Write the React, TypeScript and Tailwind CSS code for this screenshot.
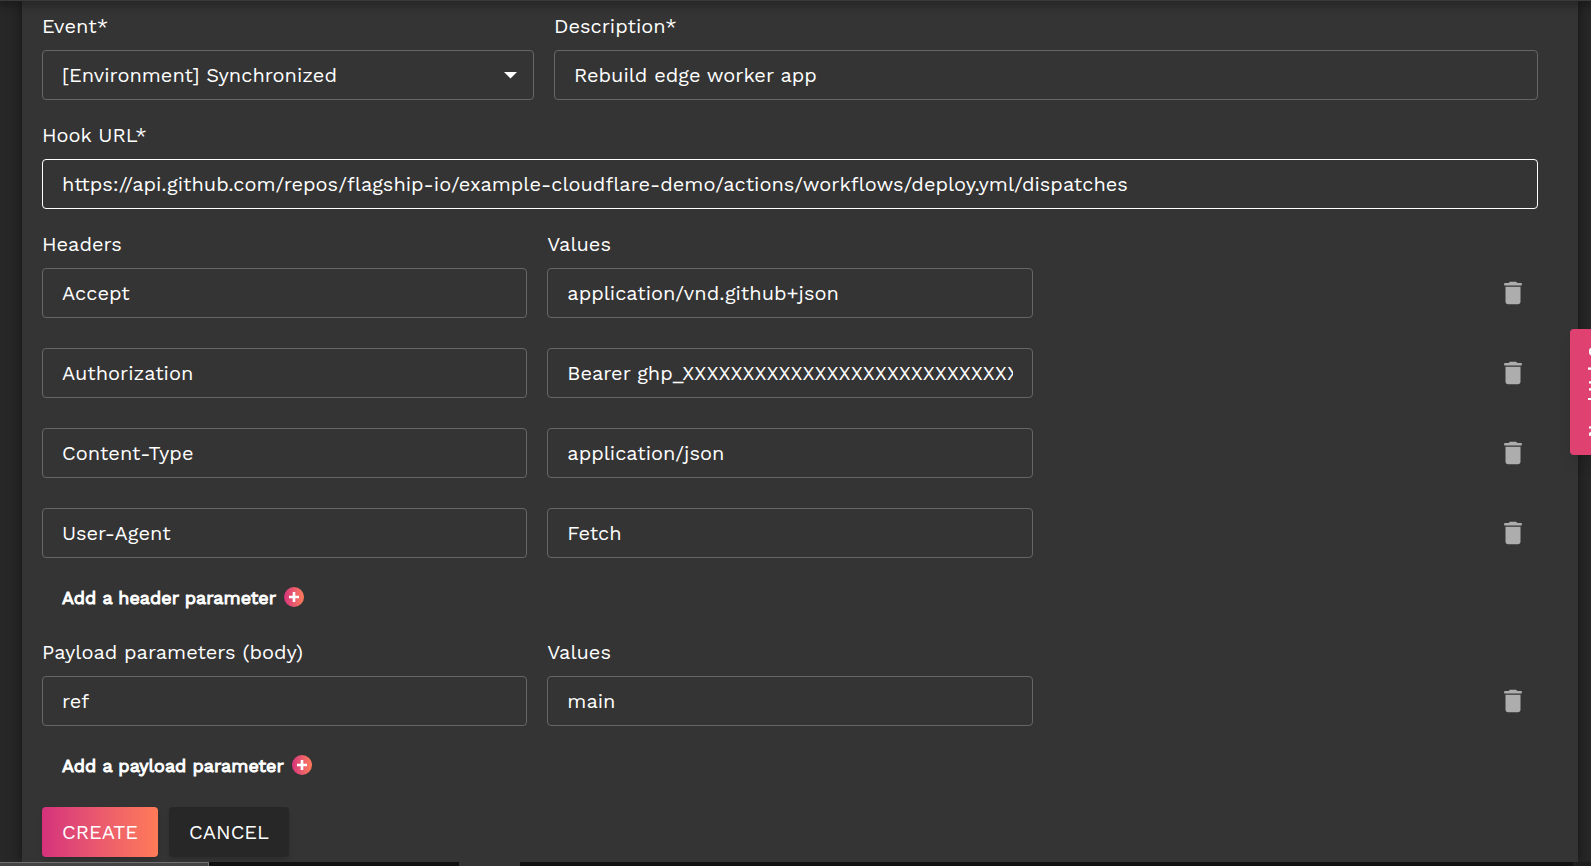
import React, { InputHTMLAttributes, useId, useState } from 'react';
import clsx from 'clsx';

interface Param {
  id: number;
  name: string;
  value: string;
}

interface ParamListProps {
  title: string;
  addLabel: string;
  initialParams: Param[];
}

const events = ['[Environment] Synchronized', '[Environment] Created', '[Environment] Deleted'];

const defaultHeaders: Param[] = [
  { id: 1, name: 'Accept', value: 'application/vnd.github+json' },
  { id: 2, name: 'Authorization', value: 'Bearer ghp_XXXXXXXXXXXXXXXXXXXXXXXXXXXXXXXXXXXX' },
  { id: 3, name: 'Content-Type', value: 'application/json' },
  { id: 4, name: 'User-Agent', value: 'Fetch' },
];

const defaultPayload: Param[] = [{ id: 1, name: 'ref', value: 'main' }];

const fieldClass =
  'block w-full h-[50px] px-[19px] rounded border bg-transparent text-[20px] text-white outline-none focus:border-white';

const TrashIcon = () => (
  <svg width="30" height="30" viewBox="0 0 24 24" fill="currentColor" aria-hidden="true">
    <path d="M6 19c0 1.1.9 2 2 2h8c1.1 0 2-.9 2-2V7H6v12zM19 4h-3.5l-1-1h-5l-1 1H5v2h14V4z" />
  </svg>
);

const PlusIcon = () => (
  <span className="flex size-5 items-center justify-center rounded-full bg-linear-to-r from-[#d5317b] to-[#ff7b57]">
    <svg width="10" height="10" viewBox="0 0 10 10" aria-hidden="true">
      <path d="M5 0v10M0 5h10" stroke="white" strokeWidth="2.6" />
    </svg>
  </span>
);

const Field: React.FC<InputHTMLAttributes<HTMLInputElement> & { label: string }> = ({ label, className, ...rest }) => {
  const id = useId();

  return (
    <div className="flex flex-col gap-3">
      <label htmlFor={id} className="leading-6">{label}</label>
      <input id={id} className={clsx(fieldClass, className)} {...rest} />
    </div>
  );
};

const ParamList: React.FC<ParamListProps> = ({ title, addLabel, initialParams }) => {
  const [params, setParams] = useState(initialParams);

  const updateParam = (id: number, patch: Partial<Param>) => {
    setParams(params.map((param) => (param.id === id ? { ...param, ...patch } : param)));
  };

  return (
    <section className="flex flex-col">
      <div className="mb-3 grid grid-cols-3 gap-5 leading-6">
        <span>{title}</span>
        <span>Values</span>
      </div>
      <div className="flex flex-col gap-[30px]">
        {params.map((param) => (
          <div key={param.id} className="grid grid-cols-3 gap-5">
            <input
              aria-label={title}
              className={clsx(fieldClass, 'border-[#666]')}
              value={param.name}
              onChange={(e) => updateParam(param.id, { name: e.target.value })}
            />
            <input
              aria-label="Value"
              className={clsx(fieldClass, 'border-[#666]')}
              value={param.value}
              onChange={(e) => updateParam(param.id, { value: e.target.value })}
            />
            <button
              type="button"
              aria-label="Delete"
              className="flex size-[50px] items-center justify-center justify-self-end text-[#adadad] hover:text-white"
              onClick={() => setParams(params.filter((p) => p.id !== param.id))}
            >
              <TrashIcon />
            </button>
          </div>
        ))}
      </div>
      <button
        type="button"
        className="mt-[14px] flex h-[50px] items-center gap-2 self-start px-5 text-[18px] [-webkit-text-stroke:1px]"
        onClick={() => setParams([...params, { id: Date.now(), name: '', value: '' }])}
      >
        {addLabel}
        <PlusIcon />
      </button>
    </section>
  );
};

export default function App() {
  const [event, setEvent] = useState(events[0]);
  const [description, setDescription] = useState('Rebuild edge worker app');
  const [hookUrl, setHookUrl] = useState(
    'https://api.github.com/repos/flagship-io/example-cloudflare-demo/actions/workflows/deploy.yml/dispatches'
  );

  return (
    <div className="flex min-h-screen flex-col bg-[#272727] font-['Work_Sans',Inter,sans-serif] text-[20px] text-white">
      <header className="relative z-10 h-px bg-[#3a3a3a] shadow-[0_1px_8px_2px_rgba(0,0,0,0.5)]" />

      <main className="flex flex-1 overflow-hidden pl-[22px] pr-[13px]">
        <form
          className="flex flex-1 flex-col bg-[#343434] pt-[13px] pr-10 pb-[5px] pl-5 shadow-[0_0_12px_rgba(0,0,0,0.5)]"
          onSubmit={(e) => e.preventDefault()}
        >
          <div className="mb-[23px] grid grid-cols-[1fr_2fr] gap-5">
            <div className="flex flex-col gap-3">
              <label htmlFor="event" className="leading-6">Event*</label>
              <div className="relative">
                <select
                  id="event"
                  className={clsx(fieldClass, 'appearance-none border-[#666]')}
                  value={event}
                  onChange={(e) => setEvent(e.target.value)}
                >
                  {events.map((name) => (
                    <option key={name} className="bg-[#343434]">{name}</option>
                  ))}
                </select>
                <svg
                  className="pointer-events-none absolute top-[22px] right-[17px]"
                  width="13"
                  height="7"
                  viewBox="0 0 13 7"
                  fill="white"
                  aria-hidden="true"
                >
                  <path d="M0 0h13L6.500 6.500z" />
                </svg>
              </div>
            </div>
            <Field
              label="Description*"
              className="border-[#666]"
              value={description}
              onChange={(e) => setDescription(e.target.value)}
            />
          </div>

          <div className="mb-[23px]">
            <Field
              label="Hook URL*"
              className="border-white"
              value={hookUrl}
              onChange={(e) => setHookUrl(e.target.value)}
            />
          </div>

          <div className="mb-[17px] flex flex-col gap-[18px]">
            <ParamList title="Headers" addLabel="Add a header parameter" initialParams={defaultHeaders} />
            <ParamList title="Payload parameters (body)" addLabel="Add a payload parameter" initialParams={defaultPayload} />
          </div>

          <div className="flex gap-[11px]">
            <button
              type="submit"
              className="h-[50px] rounded bg-linear-to-r from-[#d5317b] to-[#ff7b57] px-5 shadow-md"
            >
              CREATE
            </button>
            <button type="button" className="h-[50px] rounded bg-[#272727] px-5 shadow-md">
              CANCEL
            </button>
          </div>
        </form>
      </main>

      <footer className="relative flex h-1 bg-[#111]">
        <div className="w-[209px] border-t border-r border-[#707070] bg-[#444]" />
        <div className="ml-[250px] w-[61px] bg-[#363334]" />
        <div className="ml-auto w-[18px] bg-[#1e1e1e]" />
      </footer>

      <button
        type="button"
        className="fixed top-[329px] -right-[26px] z-20 flex h-[126px] w-[47px] items-center justify-center rounded bg-[#df4270] text-[16px] font-semibold text-white shadow-lg"
      >
        <span className="rotate-180 whitespace-nowrap [writing-mode:vertical-rl]">Need Help?</span>
      </button>
    </div>
  );
}
